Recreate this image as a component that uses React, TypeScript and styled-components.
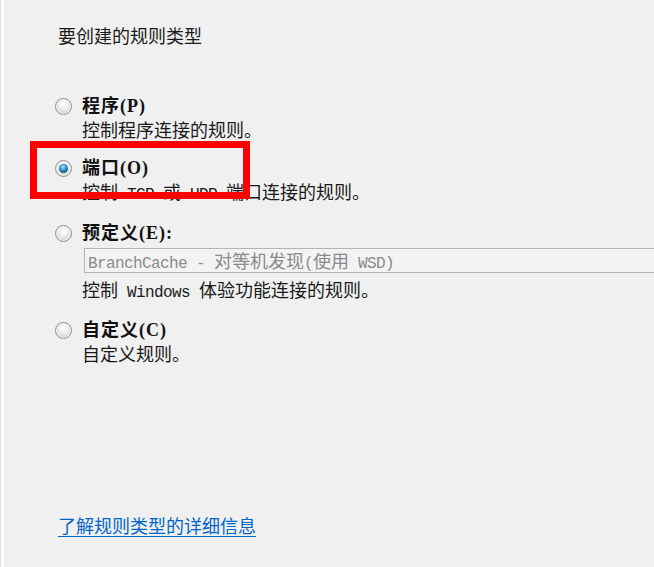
import { FC, ReactNode } from "react";
import styled, { createGlobalStyle } from "styled-components";

const GlobalStyle = createGlobalStyle`
    html, body {
        margin:0;
        padding:0;
        background:#f0f0f0;
    }
`
const Page = styled.div`
    position: relative;
    box-sizing: border-box;
    width:654px;
    min-height:567px;
    padding:24px 0 31px 55px;
    display:flex;
    flex-direction: column;
    background: linear-gradient(to right, #e2e2e2 0 1px, #fff 1px 4px, #f0f0f0 4px);
    color:#000;
    overflow: hidden;
`
const Title = styled.div`
    padding-left:3px;
    font-family: "Noto Sans CJK SC", sans-serif;
    font-size:18px;
    line-height:22px;
    color:#1a1a1a;
`
const Options = styled.div`
    margin-top:49px;
    display:flex;
    flex-direction: column;
`
const OptionRow = styled.div<{ $top: number }>`
    margin-top:${p => p.$top}px;
    display:grid;
    grid-template-columns: 27px 1fr;
    align-items: center;
`
const Label = styled.div`
    font-family: "Liberation Serif", "Noto Sans CJK SC", serif;
    font-weight:bold;
    font-size:18px;
    line-height:22px;
    letter-spacing:1px;
    color:#111;
`
const Desc = styled.div<{ $gap?: number }>`
    grid-column: 2;
    margin-top:${p => p.$gap ?? 1}px;
    font-family: "Noto Sans CJK SC", sans-serif;
    font-size:18px;
    line-height:22px;
    color:#1a1a1a;
    white-space: pre;
`
const Half = styled.span`
    font-family: "Liberation Mono", monospace;
    font-size:16px;
    letter-spacing:-0.6px;
`
const Select = styled.div`
    grid-column: 2;
    margin:4px 0 0 2px;
    height:23px;
    border:1px solid #b4b4b4;
    border-right:none;
    background:#f3f3f3;
    padding-left:3px;
    font-family: "Noto Sans CJK SC", sans-serif;
    font-size:18px;
    line-height:23px;
    color:#8a8a8a;
    white-space: pre;
`
const RadioCircle = styled.span<{ $checked?: boolean }>`
    width:17px;
    height:17px;
    box-sizing: border-box;
    border-radius:50%;
    border:1px solid #8f8f8f;
    background: radial-gradient(circle at 50% 35%, #ffffff 0%, #eaeaea 45%, #cdcdcd 80%, #bdbdbd 100%);
    box-shadow: inset 0 0 0 1px #f6f6f6;
    display:flex;
    align-items: center;
    justify-content: center;
    &::after {
        content:"";
        display:${p => p.$checked ? "block" : "none"};
        width:9px;
        height:9px;
        border-radius:50%;
        background: radial-gradient(circle at 45% 35%, #bfe6fb 0%, #3c9fd8 35%, #0f5c8f 70%, #0b2f4c 100%);
    }
`
const Link = styled.a`
    margin-top:auto;
    padding-left:3px;
    width:fit-content;
    font-family: "Noto Sans CJK SC", sans-serif;
    font-size:18px;
    line-height:22px;
    color:#0066cc;
    text-decoration: underline;
    text-underline-offset: 3px;
    cursor:pointer;
`
const Highlight = styled.div`
    position:absolute;
    left:30px;
    top:141px;
    width:220px;
    height:58px;
    box-sizing: border-box;
    border:7px solid #ff0000;
    pointer-events: none;
`

const Option: FC<{ label: string, top: number, checked?: boolean, children: ReactNode }> = ({ label, top, checked, children }) => (
    <OptionRow $top={top}>
        <RadioCircle $checked={checked} />
        <Label>{label}</Label>
        {children}
    </OptionRow>
)

const App: FC = () => {
    return (
        <>
            <GlobalStyle />
            <Page>
                <Title>要创建的规则类型</Title>
                <Options>
                    <Option label="程序(P)" top={0}>
                        <Desc>控制程序连接的规则。</Desc>
                    </Option>
                    <Option label="端口(O)" top={17} checked>
                        <Desc>控制<Half> TCP </Half>或<Half> UDP </Half>端口连接的规则。</Desc>
                    </Option>
                    <Option label="预定义(E):" top={16}>
                        <Select><Half>BranchCache - </Half>对等机发现<Half>(</Half>使用<Half> WSD)</Half></Select>
                        <Desc $gap={5}>控制<Half> Windows </Half>体验功能连接的规则。</Desc>
                    </Option>
                    <Option label="自定义(C)" top={15}>
                        <Desc>自定义规则。</Desc>
                    </Option>
                </Options>
                <Link>了解规则类型的详细信息</Link>
                <Highlight />
            </Page>
        </>
    )
}
export default App
